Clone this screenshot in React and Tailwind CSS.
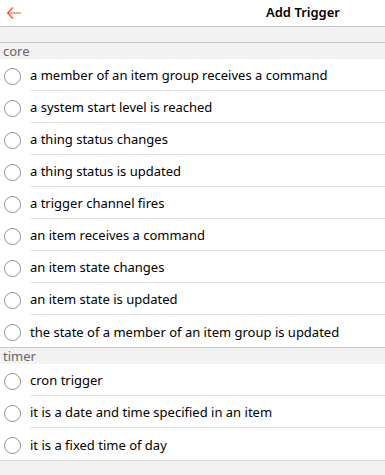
import React from 'react'

const sections = [
  {
    name: 'core',
    items: [
      'a member of an item group receives a command',
      'a system start level is reached',
      'a thing status changes',
      'a thing status is updated',
      'a trigger channel fires',
      'an item receives a command',
      'an item state changes',
      'an item state is updated',
      'the state of a member of an item group is updated',
    ],
  },
  {
    name: 'timer',
    items: ['cron trigger', 'it is a date and time specified in an item', 'it is a fixed time of day'],
  },
]

function Row({ label, last }) {
  return (
    <div className="flex h-8 items-stretch bg-white">
      <div className="flex w-[30px] shrink-0 items-center pl-[4px] pt-[2px]">
        <span className="block h-[17px] w-[17px] rounded-full border border-[#909090]" />
      </div>
      <div className={'flex flex-1 items-center pt-[3px] text-[13px] text-black ' + (last ? '' : 'border-b border-[#e3e3e3]')}>
        {label}
      </div>
    </div>
  )
}

export default function App() {
  return (
    <div className="min-h-[475px] bg-[#f2f2f2]" style={{ fontFamily: '"Noto Sans", "Open Sans", sans-serif' }}>
      {/* Header */}
      <header className="flex h-[27px] items-center border-b border-[#c8c8c8] bg-white">
        <svg className="ml-[6px] h-4 w-4" viewBox="0 0 16 16" fill="none" stroke="#f4511e" strokeWidth="1.2">
          <path d="M15 8H1.5M7 2.5L1.5 8L7 13.5" />
        </svg>
        <div className="ml-[244px] text-[13px] font-semibold text-black">Add Trigger</div>
      </header>

      <div className="h-[16px] border-b border-[#c8c8c8] bg-[#f2f2f2]" />

      {sections.map((s, si) => (
        <div key={s.name} className={si > 0 ? 'border-t border-[#c8c8c8]' : ''}>
          <div className="flex h-4 items-center bg-[#f2f2f2] pl-[3px] pt-[2px] text-[13px] text-[#666]">{s.name}</div>
          {s.items.map((it, i) => (
            <Row key={it} label={it} last={i === s.items.length - 1} />
          ))}
        </div>
      ))}
      <div className="border-t border-[#dcdcdc]" />
    </div>
  )
}
